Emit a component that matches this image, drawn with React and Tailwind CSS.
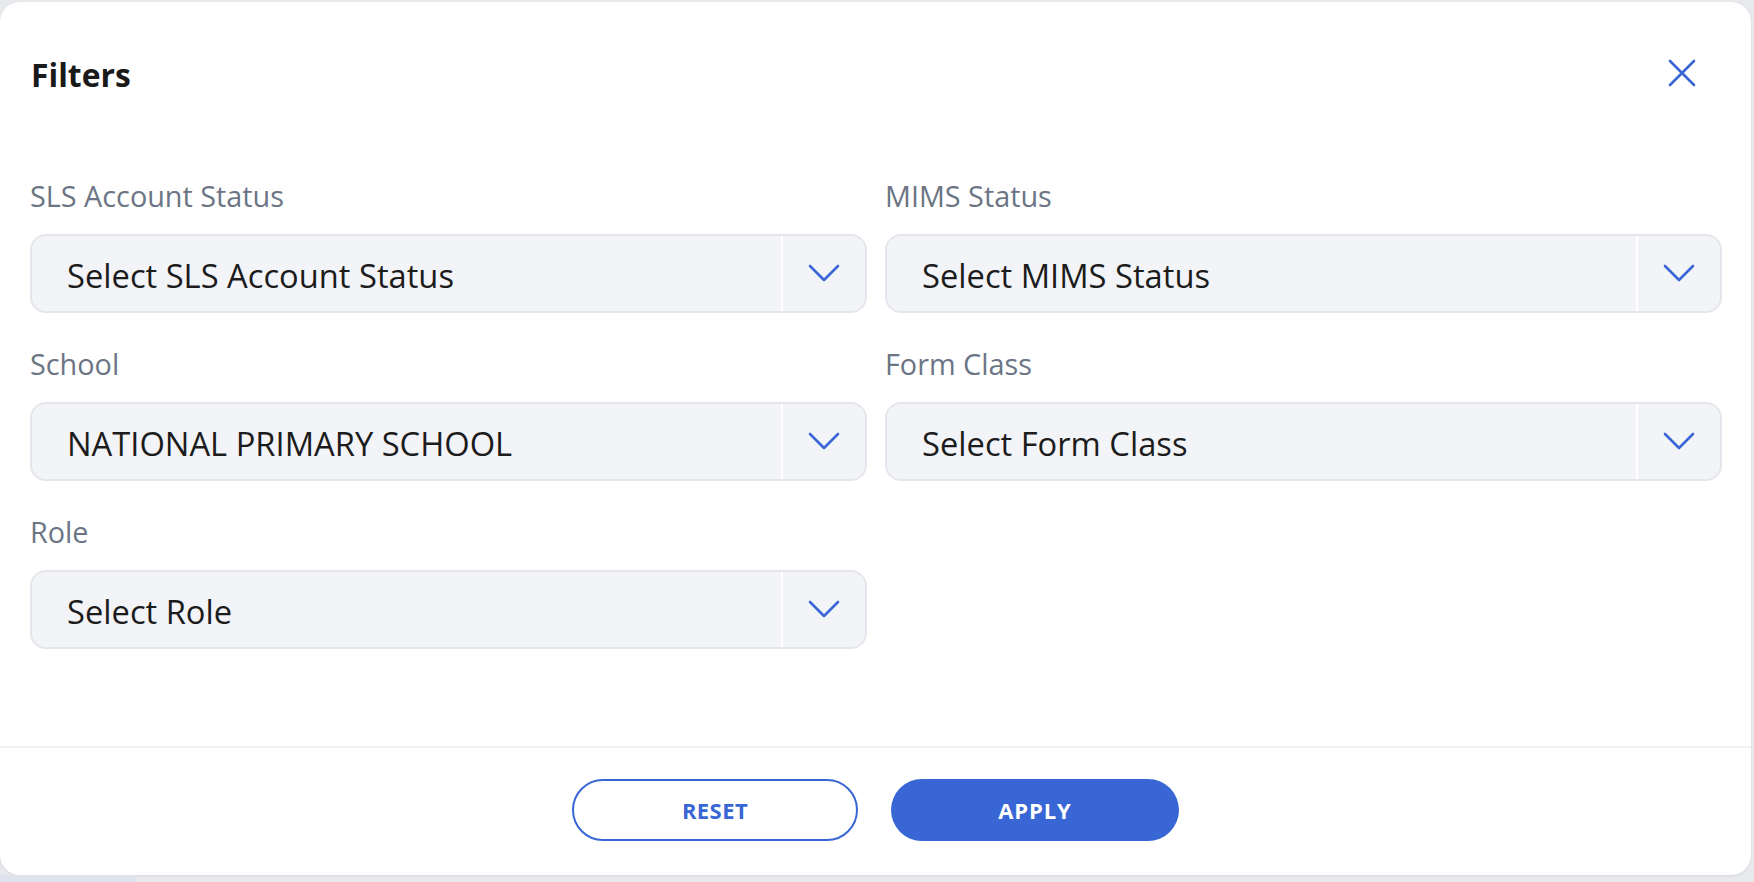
import React from "react";

function Chevron() {
  return (
    <svg width="32" height="19" viewBox="0 0 32 19" fill="none">
      <path d="M2 2 L16 16 L30 2" stroke="#3866d4" strokeWidth="2.6" strokeLinecap="round" strokeLinejoin="round" />
    </svg>
  );
}

function Field({ label, value }) {
  return (
    <div className="flex flex-col">
      <div className="h-[36px] leading-[36px] text-[28.8px] text-[#6b7585]">{label}</div>
      <div className="mt-[20px] h-[79px] flex items-stretch rounded-[16px] border-2 border-[#e4e6eb] bg-[#f3f4f8]">
        <div className="flex-1 flex items-center pl-[35px] pt-[4px] text-[32.7px] text-[#1c1c1c] whitespace-nowrap overflow-hidden">
          {value}
        </div>
        <div className="w-[84px] flex items-center justify-center border-l-2 border-white">
          <Chevron />
        </div>
      </div>
    </div>
  );
}

export default function App() {
  return (
    <div
      className="w-full h-[882px] bg-[#e8e9ed] overflow-hidden flex flex-col"
      style={{ fontFamily: '"Open Sans", "Noto Sans", sans-serif' }}
    >
      <div className="mt-[2px] w-[1751px] h-[873px] bg-white rounded-[20px] shadow-[0_1px_3px_rgba(0,0,0,0.08)] flex flex-col shrink-0">
        <div className="flex items-center justify-between pl-[31px] pr-[54px] pt-[53px]">
          <h1 className="text-[31.8px] leading-[40px] font-bold text-[#1a1a1a]">Filters</h1>
          <button className="w-[30px] h-[30px] flex items-center justify-center -mt-[4px]">
            <svg width="28" height="28" viewBox="0 0 28 28" fill="none">
              <path d="M2 2 L26 26 M26 2 L2 26" stroke="#3866d4" strokeWidth="2.6" strokeLinecap="round" />
            </svg>
          </button>
        </div>

        <div className="grid grid-cols-2 gap-x-[18px] gap-y-[33px] pl-[30px] pr-[29px] mt-[83px]">
          <Field label="SLS Account Status" value="Select SLS Account Status" />
          <Field label="MIMS Status" value="Select MIMS Status" />
          <Field label="School" value="NATIONAL PRIMARY SCHOOL" />
          <Field label="Form Class" value="Select Form Class" />
          <Field label="Role" value="Select Role" />
        </div>

        <div className="mt-[97px] h-[2px] bg-[#f1f1f5]" />

        <div className="flex justify-center gap-[33px] pt-[31px]">
          <button className="w-[286px] h-[62px] rounded-full border-2 border-[#3866d4] bg-white text-[#3866d4] text-[22px] font-bold tracking-[0.02em]">
            RESET
          </button>
          <button className="w-[288px] h-[62px] rounded-full bg-[#3866d4] text-white text-[22px] font-bold tracking-[0.04em]">
            APPLY
          </button>
        </div>
      </div>
      <div className="flex h-[7px] shrink-0">
        <div className="w-[135px] bg-[#dfe3ee]" />
        <div className="flex-1" />
      </div>
    </div>
  );
}
